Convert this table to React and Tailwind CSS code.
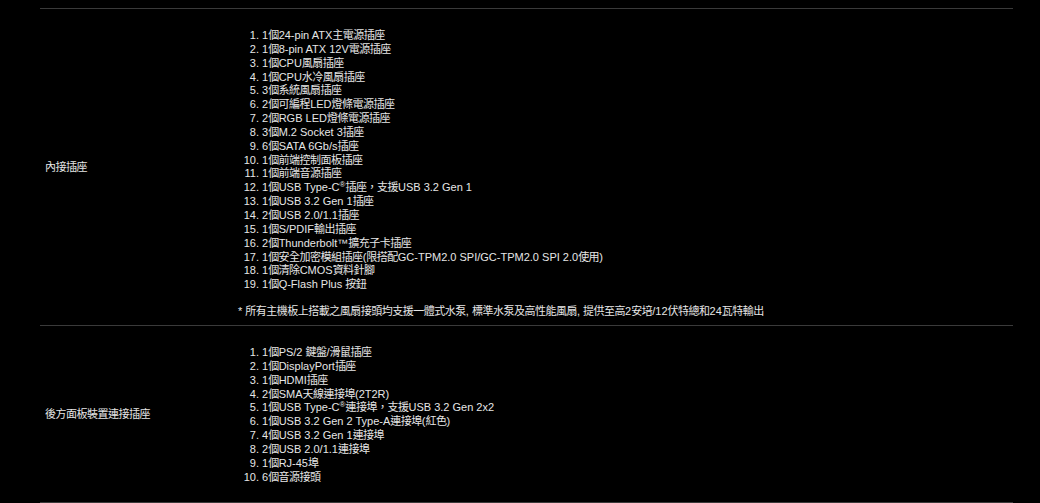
// CJK glyphs in the source render a touch narrower than Noto CJK, so tighten them
const cjk = (text) =>
  text.split(/([\u3000-\u9fff\uff00-\uffef]+)/).map((part, i) =>
    /[\u3000-\u9fff\uff00-\uffef]/.test(part) ? (
      <span key={i} className="tracking-[-0.5px]">{part}</span>
    ) : (
      part
    )
  );

const TypeC = () => <>Type-C<sup className="text-[8px]">®</sup></>;

const internal = [
  "1個24-pin ATX主電源插座",
  "1個8-pin ATX 12V電源插座",
  "1個CPU風扇插座",
  "1個CPU水冷風扇插座",
  "3個系統風扇插座",
  "2個可編程LED燈條電源插座",
  "2個RGB LED燈條電源插座",
  "3個M.2 Socket 3插座",
  "6個SATA 6Gb/s插座",
  "1個前端控制面板插座",
  "1個前端音源插座",
  <>{cjk("1個USB ")}<TypeC />{cjk("插座，支援USB 3.2 Gen 1")}</>,
  "1個USB 3.2 Gen 1插座",
  "2個USB 2.0/1.1插座",
  "1個S/PDIF輸出插座",
  "2個Thunderbolt™擴充子卡插座",
  "1個安全加密模組插座(限搭配GC-TPM2.0 SPI/GC-TPM2.0 SPI 2.0使用)",
  "1個清除CMOS資料針腳",
  "1個Q-Flash Plus 按鈕",
];

const rear = [
  "1個PS/2 鍵盤/滑鼠插座",
  "1個DisplayPort插座",
  "1個HDMI插座",
  "2個SMA天線連接埠(2T2R)",
  <>{cjk("1個USB ")}<TypeC />{cjk("連接埠，支援USB 3.2 Gen 2x2")}</>,
  "1個USB 3.2 Gen 2 Type-A連接埠(紅色)",
  "4個USB 3.2 Gen 1連接埠",
  "2個USB 2.0/1.1連接埠",
  "1個RJ-45埠",
  "6個音源接頭",
];

const SpecList = ({ items }) => (
  <ol className="list-decimal pl-6">
    {items.map((item, i) => (
      <li key={i} className="leading-[13.85px]">
        {typeof item === "string" ? cjk(item) : item}
      </li>
    ))}
  </ol>
);

const App = () => {
  return (
    <div
      className="min-h-[503px] bg-black text-[#e6e6e6] text-[11px] pt-2"
      style={{ fontFamily: '"Liberation Sans", "Noto Sans CJK TC", sans-serif' }}
    >
      <div className="ml-10 w-[973px]">
        {/* Internal connectors */}
        <div className="flex border-t border-[#3a3a3a]">
          <div className="w-[198px] pl-[5px] flex items-center">{cjk("內接插座")}</div>
          <div className="flex-1 pt-5 pb-[7px]">
            <SpecList items={internal} />
            <p className="mt-[12px] leading-[14px]">
              {cjk("* 所有主機板上搭載之風扇接頭均支援一體式水泵, 標準水泵及高性能風扇, 提供至高2安培/12伏特總和24瓦特輸出")}
            </p>
          </div>
        </div>

        {/* Rear panel */}
        <div className="flex border-t border-b border-[#3a3a3a]">
          <div className="w-[198px] pl-[5px] flex items-center">{cjk("後方面板裝置連接插座")}</div>
          <div className="flex-1 pt-5 pb-[18px]">
            <SpecList items={rear} />
          </div>
        </div>
      </div>
    </div>
  );
};

export default App;
